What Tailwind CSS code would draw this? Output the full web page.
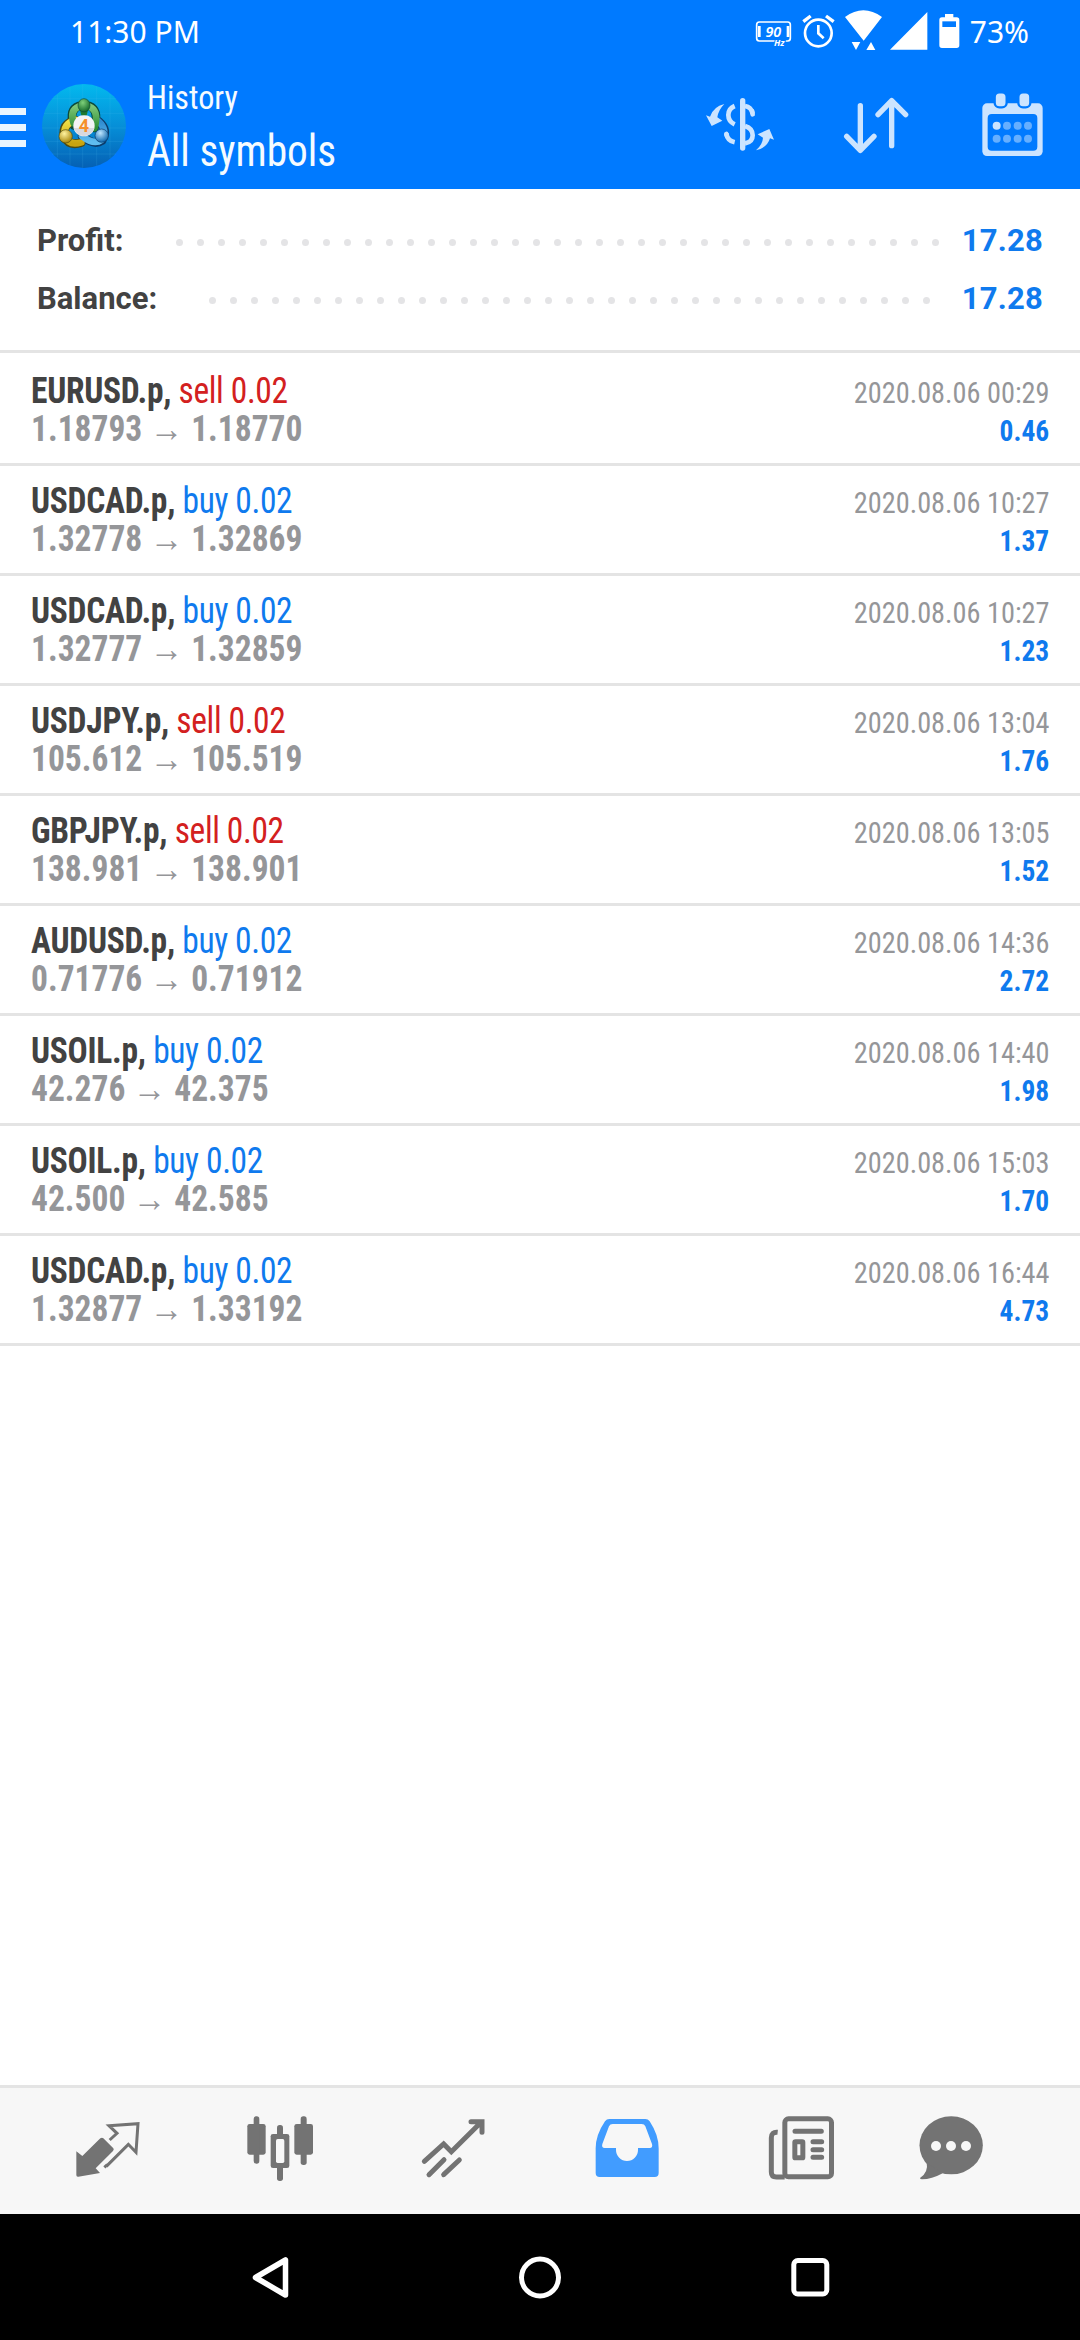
<!DOCTYPE html>
<html lang="en">
<head>
<meta charset="utf-8">
<title>History</title>
<script src="https://cdn.jsdelivr.net/npm/@tailwindcss/browser@4"></script>
</head>
<body class="bg-white">
<div class="flex h-[2340px] w-[1080px] flex-col overflow-hidden bg-white font-['Roboto_Condensed',Roboto,sans-serif]">

  <!-- status bar -->
  <div class="flex h-16 items-center bg-[#007aff] pl-[70px] font-['Noto_Sans',sans-serif] text-[30px] leading-[64px] text-white">
    <span>11:30 PM</span>
    <svg class="mt-[-4px] ml-auto h-[44px] w-[207px]" viewBox="39 24 621 132" fill="none">
      <rect x="47" y="66" width="101" height="57" rx="8" stroke="#fff" stroke-width="5"/>
      <path d="M55 78V111M141 78V111" stroke="#fff" stroke-width="8"/>
      <text x="97" y="110" text-anchor="middle" font-family="Noto Sans, sans-serif" font-size="43" font-weight="600" font-style="italic" fill="#fff">90</text>
      <text x="99" y="137" font-family="Noto Sans, sans-serif" font-size="27" font-weight="700" font-style="italic" fill="#fff" stroke="#007aff" stroke-width="6" paint-order="stroke">Hz</text>
      <circle cx="232" cy="99" r="40" stroke="#fff" stroke-width="8"/>
      <path d="M232 75V100L248 115" stroke="#fff" stroke-width="8"/>
      <path d="M187 65L209 48M255 48L278 65" stroke="#fff" stroke-width="10"/>
      <path d="M312 51Q367 11 423 51L368 122ZM332 126H358L345 150ZM376 150H403L390 126ZM447 149L559 36V149Z" fill="#fff"/>
      <path d="M612 42H637V52H647Q655 52 655 60V136Q655 144 647 144H603Q595 144 595 136V60Q595 52 603 52H612Z" fill="#fff"/>
      <path d="M604 64H645V81H604Z" fill="#007aff"/>
    </svg>
    <span class="mr-[51px] ml-[9px]">73%</span>
  </div>

  <!-- app bar -->
  <div class="flex h-[125px] shrink-0 items-start bg-[#007aff] text-[#f5fbff]">
    <div class="mt-[44px] flex w-[26px] flex-col gap-[9px]">
      <div class="h-[7px] bg-[#e9f5ff]"></div>
      <div class="h-[7px] bg-[#e9f5ff]"></div>
      <div class="h-[7px] bg-[#e9f5ff]"></div>
    </div>
    <svg class="mt-5 ml-4 size-[84px]" viewBox="126 252 252 252" fill="none">
      <defs>
        <linearGradient id="sky" x1="0" y1="0" x2="0" y2="1"><stop offset="0" stop-color="#03b9ee"/><stop offset=".5" stop-color="#068fd8"/><stop offset="1" stop-color="#0560b4"/></linearGradient>
        <linearGradient id="gr" x1="0" y1="0" x2="0" y2="1"><stop offset="0" stop-color="#7cc576"/><stop offset="1" stop-color="#2f8f35"/></linearGradient>
        <linearGradient id="ye" x1="0" y1="0" x2="0" y2="1"><stop offset="0" stop-color="#f2e24a"/><stop offset="1" stop-color="#c9a40f"/></linearGradient>
        <linearGradient id="bl" x1="0" y1="0" x2="0" y2="1"><stop offset="0" stop-color="#2f8bd0"/><stop offset="1" stop-color="#5fbdf0"/></linearGradient>
        <radialGradient id="hg" cx=".4" cy=".3" r=".7"><stop offset="0" stop-color="#7ed07a"/><stop offset="1" stop-color="#14692a"/></radialGradient>
        <radialGradient id="hy" cx=".4" cy=".3" r=".7"><stop offset="0" stop-color="#fff3a0"/><stop offset="1" stop-color="#a8860a"/></radialGradient>
        <radialGradient id="hb" cx=".4" cy=".3" r=".7"><stop offset="0" stop-color="#bfe6ff"/><stop offset="1" stop-color="#0f68ad"/></radialGradient>
      </defs>
      <circle cx="252" cy="378" r="126" fill="url(#sky)"/>
      <path d="M172 284V472M210 260V496M248 253V503M290 258V497M330 282V474M155 296H349M132 340H372M126 384H378M134 424H370M156 462H348" stroke="#5cc4f4" stroke-opacity=".22" stroke-width="2"/>
      <path d="M221 376Q206 330 236 318H268Q298 330 283 384" stroke="#0d4a3a" stroke-width="26" stroke-linecap="round"/>
      <path d="M244 428Q206 440 192 408Q186 372 226 360" stroke="#4d4a12" stroke-width="26" stroke-linecap="round"/>
      <path d="M296 364Q326 390 306 422Q282 438 246 408" stroke="#0c3d6c" stroke-width="26" stroke-linecap="round"/>
      <path d="M244 427Q206 438 194 408Q188 372 226 360" stroke="url(#ye)" stroke-width="20" stroke-linecap="round"/>
      <path d="M296 364Q324 390 304 420Q282 436 246 408" stroke="url(#bl)" stroke-width="20" stroke-linecap="round"/>
      <path d="M221 370Q208 332 236 320H268Q298 332 284 384" stroke="url(#gr)" stroke-width="20" stroke-linecap="round"/>
      <circle cx="252" cy="377" r="32" fill="#f3f3f5"/>
      <path d="M221 384H283A32 32 0 0 1 221 384Z" fill="#d8d8de"/>
      <path d="M240 330H264L260 346H244Z" fill="#1d7a30"/>
      <ellipse cx="252" cy="316" rx="18" ry="20" fill="url(#hg)" stroke="#0d4a3a" stroke-width="2"/>
      <circle cx="197" cy="409" r="20" fill="url(#hy)" stroke="#4d4a12" stroke-width="2"/>
      <circle cx="305" cy="407" r="20" fill="url(#hb)" stroke="#0c3d6c" stroke-width="2"/>
      <text x="252" y="396" text-anchor="middle" font-family="Roboto, sans-serif" font-size="54" font-weight="700" fill="#f5902a">4</text>
    </svg>
    <div class="ml-[21px] flex flex-col pt-[14px]">
      <span class="origin-left scale-x-[.975] text-[33px] leading-[40px]">History</span>
      <span class="mt-[6px] w-[206px] origin-left scale-x-[.92] text-[45px] leading-[54px] whitespace-nowrap">All symbols</span>
    </div>
    <svg class="mt-7 ml-auto h-[66px] w-[72px]" viewBox="42 21 216 198" fill="none" stroke="#cce4ff" stroke-width="14">
      <path d="M158 47V189" stroke-width="16" stroke-linecap="round"/>
      <path d="M134 63Q115 71 115 90Q115 109 134 118M109 145Q112 167 134 172M165 63Q184 66 188 86M165 123Q188 130 188 151Q188 172 165 175"/>
      <path d="M186 78L188 88M109 147L110 151" stroke-linecap="round"/>
      <path d="M103 57Q85 75 82 97L97 107L65 123L48 91L60 95Q70 65 103 57ZM198 196Q218 178 219 158L203 148L238 132L252 164L240 160Q232 188 198 196Z" fill="#cce4ff" stroke="none"/>
    </svg>
    <svg class="mt-7 ml-[66px] h-[66px] w-[72px]" viewBox="456 21 216 198" fill="none" stroke="#cce4ff" stroke-width="16" stroke-linecap="round" stroke-linejoin="round">
      <path d="M511 62V196M470 154L511 196L552 154M605 182V47M564 89L605 47L647 89"/>
    </svg>
    <svg class="mt-7 mr-[34px] ml-[66px] h-[66px] w-[66px]" viewBox="870 21 198 198" fill="none">
      <rect x="877" y="55" width="181" height="158" rx="14" fill="#cce4ff"/>
      <rect x="893" y="87" width="149" height="110" rx="12" fill="#007aff"/>
      <g fill="#cce4ff" stroke="#007aff" stroke-width="7">
        <rect x="914" y="22" width="36" height="45" rx="14"/>
        <rect x="985" y="22" width="36" height="45" rx="14"/>
      </g>
      <circle cx="920" cy="122" r="12" fill="#cce4ff"/>
      <g fill="#66afff"><circle cx="951" cy="122" r="12"/><circle cx="983" cy="122" r="12"/><circle cx="1014" cy="122" r="12"/><circle cx="920" cy="161" r="12"/><circle cx="951" cy="161" r="12"/><circle cx="983" cy="161" r="12"/><circle cx="1014" cy="161" r="12"/></g>
    </svg>
  </div>

  <!-- totals -->
  <div class="flex h-[164px] shrink-0 flex-col border-b-[3px] border-[#e4e4e4] pt-[23px] pr-[37px] pl-[37px] font-['Roboto',sans-serif] text-[31px] leading-[58px] font-bold">
    <div class="flex h-[58px] items-center">
      <span class="w-[139px] text-[#424242]">Profit:</span>
      <svg class="mt-[3px] h-[7px] w-[764px]" viewBox="0 0 764 7"><path d="M3.5 3.5H760" stroke="#e4e4e6" stroke-width="7" stroke-linecap="round" stroke-dasharray="0 21"/></svg>
      <span class="ml-auto tracking-[.2px] text-[#0f7aee]">17.28</span>
    </div>
    <div class="flex h-[58px] items-center">
      <span class="w-[172px] text-[#424242]">Balance:</span>
      <svg class="mt-[3px] h-[7px] w-[722px]" viewBox="0 0 722 7"><path d="M3.5 3.5H718" stroke="#e4e4e6" stroke-width="7" stroke-linecap="round" stroke-dasharray="0 21"/></svg>
      <span class="ml-auto tracking-[.2px] text-[#0f7aee]">17.28</span>
    </div>
  </div>

  <!-- deals -->
  <div id="deals" class="flex grow flex-col"></div>

  <!-- tabs -->
  <div class="flex h-[129px] shrink-0 border-t-[3px] border-[#e4e4e4] bg-[#f7f7f7] pt-6 pl-[73px] text-[#737373]">
    <svg class="size-[70px]" viewBox="39 96 210 210" fill="none">
      <path d="M49 214L67 228L121 175Q126 171 130 175L160 205Q163 209 159 213L107 265L120 279L55 290Q49 291 49 285Z" fill="currentColor"/>
      <path d="M149 180L171 160L147 137L234 131L228 217L205 193L139 259" stroke="currentColor" stroke-width="9"/>
      <path d="M133 262L142 254" stroke="currentColor" stroke-width="9"/>
    </svg>
    <svg class="ml-[102px] size-[70px]" viewBox="555 96 210 210" fill="currentColor">
      <rect x="562" y="132" width="55" height="92" rx="7"/><rect x="581" y="109" width="17" height="142" rx="8"/>
      <rect x="703" y="132" width="56" height="92" rx="7"/><rect x="722" y="109" width="18" height="146" rx="8"/>
      <rect x="651" y="135" width="18" height="168" rx="8"/><rect x="632" y="162" width="56" height="102" rx="7"/>
      <rect x="648" y="177" width="25" height="72" rx="5" fill="#f7f7f7"/>
    </svg>
    <svg class="ml-[105px] size-[70px]" viewBox="30 96 210 210" fill="none" stroke="currentColor" stroke-width="15" stroke-linecap="round">
      <path d="M43 244L101 192L124 215L214 126M183 125H216V157M57 284L102 239M101 284L148 240"/>
    </svg>
    <svg class="ml-[102px] size-[70px]" viewBox="546 96 210 210" fill="#419cff">
      <path fill-rule="evenodd" d="M598 117H706Q714 117 719 124Q746 165 746 205V279Q746 291 734 291H569Q557 291 557 279V205Q557 165 585 124Q590 117 598 117ZM608 132H695Q703 132 706 139L726 192Q729 204 719 204H684V210A33 33 0 0 1 618 210V204H584Q574 204 577 192L597 139Q600 132 608 132Z"/>
    </svg>
    <svg class="ml-[104px] size-[70px]" viewBox="78 96 210 210" fill="none" stroke="currentColor" stroke-width="15">
      <rect x="134.500" y="116.500" width="140" height="174" rx="11"/>
      <path d="M113 157Q94 155 94 173V276Q94 291 109 291H134"/>
      <path d="M165 154H244M219 185H245M219 209H245M219 232H245" stroke-linecap="round"/>
      <rect x="164.500" y="185.500" width="24" height="48" rx="2"/>
    </svg>
    <svg class="ml-[80px] size-[70px]" viewBox="528 96 210 210" fill="currentColor">
      <ellipse cx="633.500" cy="196" rx="95" ry="87"/>
      <path d="M560 248Q566 276 540 294Q540 298 546 298Q575 298 608 280Z"/>
      <g fill="#f7f7f7"><circle cx="588" cy="198" r="15"/><circle cx="633" cy="198" r="15"/><circle cx="678" cy="198" r="15"/></g>
    </svg>
  </div>

  <!-- system navigation -->
  <div class="flex h-[126px] shrink-0 items-center justify-between bg-black px-[246px]">
    <svg class="size-12" viewBox="0 0 48 48" fill="none" stroke="#fff" stroke-width="5.500" stroke-linejoin="round"><path d="M9.500 24.500L39.500 7V42Z"/></svg>
    <svg class="size-12" viewBox="0 0 48 48" fill="none" stroke="#fff" stroke-width="5"><circle cx="24" cy="24.500" r="18.500"/></svg>
    <svg class="size-12" viewBox="0 0 48 48" fill="none" stroke="#fff" stroke-width="5"><rect x="7.800" y="7.500" width="33" height="33.500" rx="4"/></svg>
  </div>
</div>

<script>
  const deals = [
    ['EURUSD.p', 'sell', '1.18793', '1.18770', '00:29', '0.46'],
    ['USDCAD.p', 'buy', '1.32778', '1.32869', '10:27', '1.37'],
    ['USDCAD.p', 'buy', '1.32777', '1.32859', '10:27', '1.23'],
    ['USDJPY.p', 'sell', '105.612', '105.519', '13:04', '1.76'],
    ['GBPJPY.p', 'sell', '138.981', '138.901', '13:05', '1.52'],
    ['AUDUSD.p', 'buy', '0.71776', '0.71912', '14:36', '2.72'],
    ['USOIL.p', 'buy', '42.276', '42.375', '14:40', '1.98'],
    ['USOIL.p', 'buy', '42.500', '42.585', '15:03', '1.70'],
    ['USDCAD.p', 'buy', '1.32877', '1.33192', '16:44', '4.73'],
  ];
  document.getElementById('deals').innerHTML = deals.map(([sym, side, from, to, time, profit], i) => `
    <div class="flex h-[110px] shrink-0 justify-between border-t-[3px] ${i ? 'border-[#e4e4e4]' : 'border-transparent'} pt-4 pr-[31px] pl-[31px] leading-[38px]">
      <div class="flex flex-col items-start text-[36px] whitespace-nowrap">
        <div class="origin-left scale-x-[.93] font-bold tracking-[-0.3px] text-[#424242]">${sym}, <span class="font-normal tracking-[-0.4px] ${side === 'sell' ? 'text-[#d32020]' : 'text-[#0f7aee]'}">${side} 0.02</span></div>
        <div class="origin-left scale-x-[.93] font-bold text-[#959699]">${from} → ${to}</div>
      </div>
      <div class="mt-[2px] flex flex-col items-end text-[30px] whitespace-nowrap">
        <div class="origin-right scale-x-[.943] text-[#959699]">2020.08.06 ${time}</div>
        <div class="origin-right scale-x-[.915] font-bold text-[#0f7aee]">${profit}</div>
      </div>
    </div>`).join('') + '<div class="h-[3px] shrink-0 bg-[#e4e4e4]"></div>';
</script>
</body>
</html>
